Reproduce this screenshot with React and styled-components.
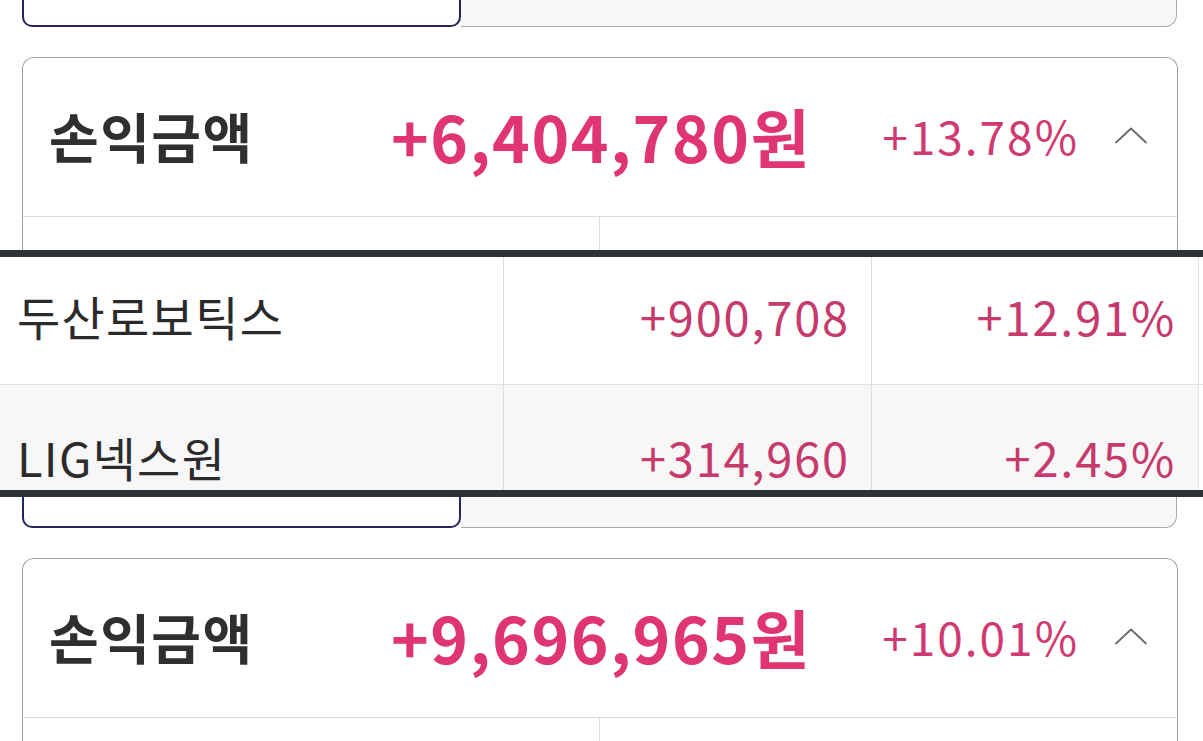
import styled, { createGlobalStyle } from 'styled-components';

const GlobalStyle = createGlobalStyle`
  html, body {
    margin: 0;
    padding: 0;
    background: #fff;
    overflow: hidden;
  }
  body {
    font-family: 'Noto Sans CJK KR', 'Noto Sans', sans-serif;
    color: #333;
  }
`

const summaries = [
  { amount: '+6,404,780원', rate: '+13.78%', tabHeight: 27, bodyHeight: 33 },
  { amount: '+9,696,965원', rate: '+10.01%', tabHeight: 31, bodyHeight: 40 },
]

const rows = [
  { name: '두산로보틱스', amount: '+900,708', rate: '+12.91%', height: 128, top: 28, shade: false },
  { name: 'LIG넥스원', amount: '+314,960', rate: '+2.45%', height: 105, top: 41, shade: true },
]

const ChevronUp = () => (
  <svg width="34" height="18" viewBox="0 0 34 18" fill="none">
    <path d="M2 16.5 L17 2.5 L32 16.5" stroke="#6a6a6a" strokeWidth="1.8" strokeLinecap="round" strokeLinejoin="round" />
  </svg>
)

const Summary = ({ data }) => (
  <>
    <TabBar height={data.tabHeight}>
      <TabActive />
      <TabRest />
    </TabBar>
    <Card>
      <CardHeader>
        <Title>손익금액</Title>
        <Amount>{data.amount}</Amount>
        <Rate>{data.rate}</Rate>
        <Toggle><ChevronUp /></Toggle>
      </CardHeader>
      <CardBody height={data.bodyHeight}>
        <BodyCell />
        <BodyCell />
      </CardBody>
    </Card>
  </>
)

const App = () => {
  return (
    <>
      <GlobalStyle />
      <Page>
        <Summary data={summaries[0]} />
        <StockBand>
          {rows.map((r) => (
            <StockRow key={r.name} height={r.height} shade={r.shade ? 1 : 0}>
              <NameCell top={r.top}>{r.name}</NameCell>
              <ValueCell top={r.top}>{r.amount}</ValueCell>
              <ValueCell top={r.top} last>{r.rate}</ValueCell>
            </StockRow>
          ))}
        </StockBand>
        <Summary data={summaries[1]} />
      </Page>
    </>
  );
}

const Page = styled.div`
  width: 1203px;
  height: 741px;
  overflow: hidden;
  display: flex;
  flex-direction: column;
`
const TabBar = styled.div`
  height: ${(p) => p.height}px;
  margin: 0 26px 0 22px;
  display: flex;
  flex-shrink: 0;
`
const TabActive = styled.div`
  width: 439px;
  box-sizing: border-box;
  border: 2px solid #25265c;
  border-top: none;
  border-radius: 0 0 10px 10px;
  background: #fff;
`
const TabRest = styled.div`
  flex: 1;
  box-sizing: border-box;
  background: #f7f7f7;
  border-bottom: 1.5px solid #a9a9a9;
  border-right: 1.5px solid #a9a9a9;
  border-radius: 0 0 12px 0;
`
const Card = styled.div`
  margin: 30px 25px 0 22px;
  border: 1.5px solid #a2a2a2;
  border-bottom: none;
  border-radius: 12px 12px 0 0;
  background: #fff;
  flex-shrink: 0;
`
const CardHeader = styled.div`
  height: 159px;
  box-sizing: border-box;
  padding: 0 0 4px 26px;
  display: grid;
  grid-template-columns: 342px 1fr auto 98px;
  align-items: center;
  border-bottom: 1.5px solid #dadada;
`
const Title = styled.div`
  font-size: 54px;
  font-weight: 700;
  color: #2f2f2f;
  letter-spacing: 1.5px;
`
const Amount = styled.div`
  font-size: 64px;
  font-weight: 700;
  color: #df3573;
  letter-spacing: 1.6px;
`
const Rate = styled.div`
  font-size: 46px;
  font-weight: 400;
  color: #cf3a72;
  letter-spacing: 2px;
`
const Toggle = styled.div`
  display: flex;
  justify-content: flex-start;
  padding-left: 35px;
  margin-top: 0;
`
const CardBody = styled.div`
  height: ${(p) => p.height}px;
  display: grid;
  grid-template-columns: 577px 1fr;
`
const BodyCell = styled.div`
  &:first-child {
    border-right: 1px solid #dedede;
  }
`
const StockBand = styled.div`
  border-top: 7px solid #2d3235;
  border-bottom: 7px solid #2d3235;
  flex-shrink: 0;
`
const StockRow = styled.div`
  height: ${(p) => p.height}px;
  display: grid;
  grid-template-columns: 504px 368px 326px 5px;
  background: ${(p) => (p.shade ? '#f7f7f7' : '#fff')};
  border-bottom: ${(p) => (p.shade ? 'none' : '1px solid #e2e2e2')};
  box-sizing: border-box;
  &::after {
    content: '';
    border-left: 1px solid #e4e4e4;
    background: #fff;
  }
`
const NameCell = styled.div`
  padding: ${(p) => p.top}px 0 0 17px;
  font-size: 47px;
  font-weight: 400;
  color: #2b2b2b;
  line-height: 1.3;
  letter-spacing: 1.3px;
  border-right: 1px solid #dcdcdc;
`
const ValueCell = styled.div`
  padding: ${(p) => p.top}px ${(p) => (p.last ? 22 : 21)}px 0 0;
  text-align: right;
  font-size: 47px;
  font-weight: 400;
  color: #c63a6d;
  line-height: 1.3;
  letter-spacing: 1.8px;
  border-right: ${(p) => (p.last ? 'none' : '1px solid #dcdcdc')};
`

export default App;
